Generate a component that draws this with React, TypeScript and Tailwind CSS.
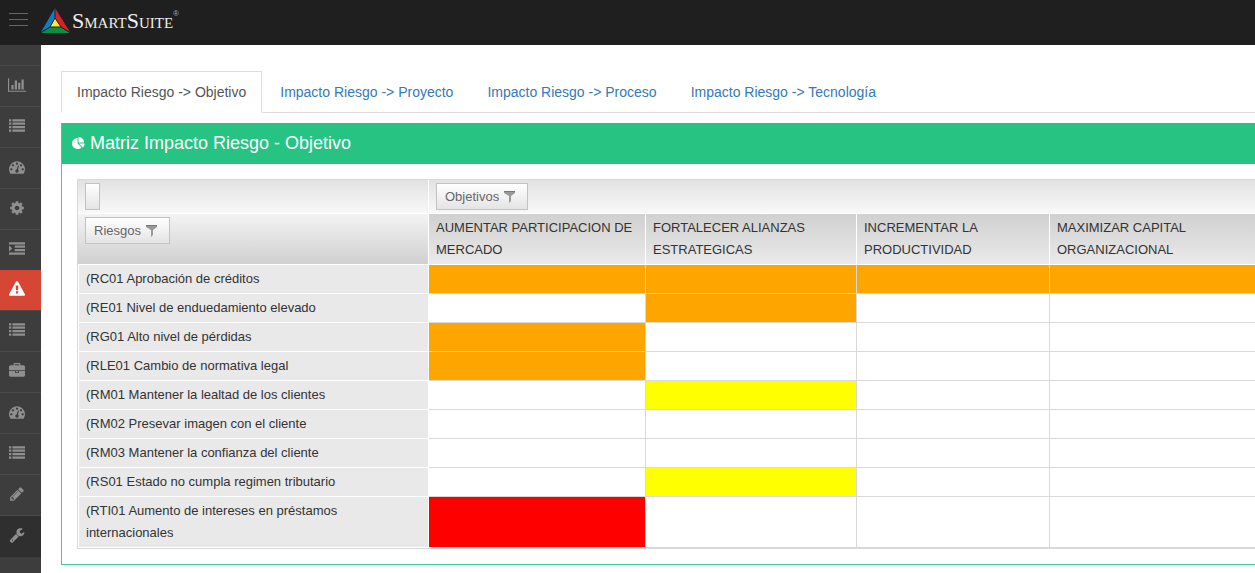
import type { ReactNode } from "react";
import clsx from "clsx";

const listPath =
  "M0 128h256v256H0zM384 128h1408v256H384zM0 512h256v256H0zM384 512h1408v256H384zM0 896h256v256H0zM384 896h1408v256H384zM0 1280h256v256H0zM384 1280h1408v256H384z";

const gaugePath =
  "M384 1152q0-53-37.5-90.5t-90.5-37.5-90.5 37.5-37.5 90.5 37.5 90.5 90.5 37.5 90.5-37.5 37.5-90.5zm192-448q0-53-37.5-90.5t-90.5-37.5-90.5 37.5-37.5 90.5 37.5 90.5 90.5 37.5 90.5-37.5 37.5-90.5zm428 481l101-382q6-26-7.5-48.5t-38.5-29.5-48 6.5-30 39.5l-101 382q-60 5-107 43.5t-63 98.5q-20 77 20 146t117 89 146-20 89-117q16-60-6-117t-72-91zm660-33q0-53-37.5-90.5t-90.5-37.5-90.5 37.5-37.5 90.5 37.5 90.5 90.5 37.5 90.5-37.5 37.5-90.5zm-640-640q0-53-37.5-90.5t-90.5-37.5-90.5 37.5-37.5 90.5 37.5 90.5 90.5 37.5 90.5-37.5 37.5-90.5zm448 192q0-53-37.5-90.5t-90.5-37.5-90.5 37.5-37.5 90.5 37.5 90.5 90.5 37.5 90.5-37.5 37.5-90.5zm320 448q0 261-141 483-19 29-54 29h-1402q-35 0-54-29-141-221-141-483 0-182 71-348t191-286 286-191 348-71 348 71 286 191 191 286 71 348z";

const chartPath =
  "M640 896v512h-256v-512h256zm384-512v1024h-256v-1024h256zm1024 1152v128h-2048v-1536h128v1408h1920zm-640-896v768h-256v-768h256zm384-384v1152h-256v-1152h256z";

const cogPath =
  "M1152 896q0-106-75-181t-181-75-181 75-75 181 75 181 181 75 181-75 75-181zm512-109v222q0 12-8 23t-20 13l-185 28q-19 54-39 91 35 50 107 138 10 12 10 25t-9 23q-27 37-99 108t-94 71q-12 0-26-9l-138-108q-44 23-91 38-16 136-29 186-7 28-36 28h-222q-14 0-24.5-8.5t-11.5-21.5l-28-184q-49-16-90-37l-141 107q-10 9-25 9-14 0-25-11-126-114-165-168-7-10-7-23 0-12 8-23 15-21 51-66.5t54-70.5q-27-50-41-99l-183-27q-13-2-21-12.5t-8-23.5v-222q0-12 8-23t19-13l186-28q14-46 39-92-40-57-107-138-10-12-10-24 0-10 9-23 26-36 98.5-107.5t94.5-71.5q13 0 26 10l138 107q44-23 91-38 16-136 29-186 7-28 36-28h222q14 0 24.5 8.5t11.5 21.5l28 184q49 16 90 37l142-107q9-9 24-9 13 0 25 10 129 119 165 170 7 8 7 22 0 12-8 23-15 21-51 66.5t-54 70.5q26 50 41 98l183 28q13 2 21 12.5t8 23.5z";

const indentPath =
  "M0 128h1792v256H0zM640 512h1152v256H640zM640 896h1152v256H640zM0 1280h1792v256H0zM352 832q0 14-9 23l-288 288q-9 9-23 9-13 0-22.5-9.5t-9.500-22.500v-576q0-13 9.500-22.500t22.500-9.500q14 0 23 9l288 288q9 9 9 23z";

const warningPath =
  "M1024 1375v-190q0-14-9.5-23.5t-22.5-9.5h-192q-13 0-22.5 9.5t-9.5 23.5v190q0 14 9.5 23.5t22.5 9.5h192q13 0 22.5-9.5t9.5-23.5zm-2-374l18-459q0-12-10-19-13-11-24-11h-220q-11 0-24 11-10 7-10 21l17 457q0 10 10 16.5t24 6.5h185q14 0 23.5-6.5t10.5-16.5zm-14-934l768 1408q35 63-2 126-17 29-46.5 46t-63.5 17h-1536q-34 0-63.5-17t-46.5-46q-37-63-2-126l768-1408q17-31 47-49t65-18 65 18 47 49z";

const briefcasePath =
  "M640 256h512v-128h-512v128zm1152 640v480q0 66-47 113t-113 47h-1472q-66 0-113-47t-47-113v-480h672v160q0 26 19 45t45 19h320q26 0 45-19t19-45v-160h672zm-768 0v128h-256v-128h256zm768-480v384h-1792v-384q0-66 47-113t113-47h352v-160q0-40 28-68t68-28h576q40 0 68 28t28 68v160h352q66 0 113 47t47 113z";

const pencilPath =
  "M491 1536l91-91-235-235-91 91v107h128v128h107zm523-928q0-22-22-22-10 0-17 7l-542 542q-7 7-7 17 0 22 22 22 10 0 17-7l542-542q7-7 7-17zm-54-192l416 416-832 832h-416v-416zm683 96q0 53-37 90l-166 166-416-416 166-165q36-38 90-38 53 0 91 38l235 234q37 39 37 91z";

const wrenchPath =
  "M448 1472q0-26-19-45t-45-19-45 19-19 45 19 45 45 19 45-19 19-45zm644-420l-682 682q-37 37-90 37-52 0-91-37l-106-108q-38-36-38-90 0-53 38-91l681-681q39 98 114.5 173.5t173.5 114.5zm634-435q0 39-23 106-47 134-164.5 217.5t-258.5 83.5q-185 0-316.5-131.5t-131.5-316.5 131.5-316.5 316.5-131.5q58 0 121.5 16.5t107.5 46.5q16 11 16 28t-16 28l-293 169v224l193 107q5-3 79-48.5t135.5-81 70.5-35.5q15 0 23.5 10t8.5 25z";

const piePath =
  "M768 890l546 546q-106 108-247.5 168t-298.5 60q-209 0-385.5-103t-279.5-279.5-103-385.5 103-385.5 279.5-279.5 385.5-103v762zm187 6h773q0 157-60 298.5t-168 247.5zm709-128h-768v-768q209 0 385.5 103t279.5 279.5 103 385.5z";

const menu = [
  { label: "Estadísticas", path: chartPath, wide: true },
  { label: "Planes", path: listPath },
  { label: "Indicadores", path: gaugePath },
  { label: "Configuración", path: cogPath },
  { label: "Procesos", path: indentPath },
  { label: "Riesgos", path: warningPath, state: "active" },
  { label: "Controles", path: listPath },
  { label: "Proyectos", path: briefcasePath },
  { label: "Tablero", path: gaugePath },
  { label: "Listas", path: listPath },
  { label: "Editar", path: pencilPath },
  { label: "Herramientas", path: wrenchPath, state: "dark" },
];

const tabs = ["Objetivo", "Proyecto", "Proceso", "Tecnología"];

const columns = [
  "AUMENTAR PARTICIPACION DE MERCADO",
  "FORTALECER ALIANZAS ESTRATEGICAS",
  "INCREMENTAR LA PRODUCTIVIDAD",
  "MAXIMIZAR CAPITAL ORGANIZACIONAL",
];

// o = medium, y = low, r = high, - = no impact
const rows = [
  { name: "(RC01 Aprobación de créditos", cells: "oooo" },
  { name: "(RE01 Nivel de enduedamiento elevado", cells: "-o--" },
  { name: "(RG01 Alto nivel de pérdidas", cells: "o---" },
  { name: "(RLE01 Cambio de normativa legal", cells: "o---" },
  { name: "(RM01 Mantener la lealtad de los clientes", cells: "-y--" },
  { name: "(RM02 Presevar imagen con el cliente", cells: "----" },
  { name: "(RM03 Mantener la confianza del cliente", cells: "----" },
  { name: "(RS01 Estado no cumpla regimen tributario", cells: "-y--" },
  { name: "(RTI01 Aumento de intereses en préstamos internacionales", cells: "r---" },
];

const levelColor: Record<string, string> = {
  o: "bg-[#ffa500]",
  y: "bg-[#ffff00]",
  r: "bg-[#ff0000]",
  "-": "bg-white",
};

function Header() {
  return (
    <header className="flex h-[45px] items-start bg-[#1f1f1f]">
      <button aria-label="Menú" className="ml-[9px] mt-[13px] flex w-[19px] flex-col gap-[5px]">
        <span className="h-px w-full bg-[#666]" />
        <span className="h-px w-full bg-[#666]" />
        <span className="h-px w-full bg-[#666]" />
      </button>
      <a href="#" className="ml-[13px] mt-2 flex items-start text-[#eee]">
        <svg width="29" height="25" viewBox="0 0 29 25">
          <path d="M14 0L0 24L9 19L14 10z" fill="#0a7fc4" />
          <path d="M14 0L29 24L20 19L14 10z" fill="#dc1f2b" />
          <path d="M0 25L9 19h11l9 6z" fill="#0c8f45" />
          <path d="M14 10L9 19h11z" fill="#fbe93c" />
          <path d="M14 0v10M14 10L9 19L0 24.500M9 19h11L29 24.500M20 19L14 10" fill="none" stroke="#1f1f1f" />
        </svg>
        <span className="ml-[2px] mt-px font-['Liberation_Serif',serif] text-[22px] leading-6 [font-variant-caps:small-caps]">
          SmartSuite
        </span>
        <span className="mt-px text-[8px] leading-[10px] text-[#aaa]">®</span>
      </a>
    </header>
  );
}

function Sidebar() {
  return (
    <nav className="w-[41px] shrink-0 bg-[#3d3d3d] pt-5">
      {menu.map((item, i) => (
        <a
          key={i}
          href="#"
          aria-label={item.label}
          className={clsx(
            "flex items-center pb-[3px]",
            item.wide ? "pl-2" : "pl-[9px]",
            item.state === "active" ? "h-10 bg-[#d64635] text-white" : "border-t border-[#4a4a4a] text-[#8f8f8f]",
            item.state === "dark" && "h-[42px] bg-[#2f2f2f]",
            !item.state && "h-[41px]"
          )}
        >
          <svg
            width={item.wide ? 18 : 16}
            height="16"
            viewBox={item.wide ? "0 0 2048 1792" : "0 0 1792 1792"}
            fill="currentColor"
          >
            <path d={item.path} />
          </svg>
        </a>
      ))}
    </nav>
  );
}

function FieldButton({ children }: { children: ReactNode }) {
  return (
    <button className="flex h-[27px] items-center gap-[5px] border border-[#c2c2c2] bg-linear-to-b from-white to-[#e4e4e4] px-2 text-[13px] text-[#666]">
      {children}
      <svg width="11" height="12" viewBox="0 0 11 12" className="mr-1">
        <path d="M0 0h11v2L7 5v5L5 12V5L0 2z" fill="#999" />
        <path d="M0 0h11v1H0z" fill="#777" />
      </svg>
    </button>
  );
}

function Matrix() {
  return (
    <table className="w-full table-fixed border-separate border-spacing-0 border-y border-l border-[#d9d9d9] text-left text-[13px] leading-[22px] text-[#333]">
      <colgroup>
        <col className="w-[351px]" />
        <col className="w-[217px]" />
        <col className="w-[211px]" />
        <col className="w-[193px]" />
        <col />
      </colgroup>
      <thead>
        <tr>
          <td className="border-r border-b border-white bg-linear-to-b from-[#e2e2e2] to-[#f8f8f8] px-[7px] py-[3px]">
            <button
              aria-label="Filtros"
              className="block h-[27px] w-[15px] border border-[#c2c2c2] bg-linear-to-b from-white to-[#e4e4e4]"
            />
          </td>
          <td colSpan={4} className="border-b border-white bg-linear-to-b from-[#e2e2e2] to-[#f8f8f8] px-[7px] py-[3px]">
            <FieldButton>Objetivos</FieldButton>
          </td>
        </tr>
        <tr>
          <td className="border-r border-b border-white bg-linear-to-b from-[#f3f3f3] to-[#d0d0d0] px-[7px] py-[3px] align-top">
            <FieldButton>Riesgos</FieldButton>
          </td>
          {columns.map((column, i) => (
            <th
              key={column}
              scope="col"
              className={clsx(
                "border-b border-white bg-linear-to-b from-[#d0d0d0] to-[#eaeaea] px-[7px] py-[3px] font-normal",
                i < 3 && "border-r"
              )}
            >
              <div className="max-w-[200px]">{column}</div>
            </th>
          ))}
        </tr>
      </thead>
      <tbody>
        {rows.map((row) => (
          <tr key={row.name}>
            <th scope="row" className="border-x border-b border-white bg-[#e9e9e9] px-[7px] py-[3px] font-normal">
              <div className="max-w-[300px]">{row.name}</div>
            </th>
            {row.cells.split("").map((level, i) => (
              <td key={i} className={clsx("border-b border-[#d9d9d9]", i < 3 && "border-r", levelColor[level])} />
            ))}
          </tr>
        ))}
      </tbody>
    </table>
  );
}

export default function App() {
  return (
    <div className="min-h-screen bg-white font-['Liberation_Sans',Arial,sans-serif]">
      <Header />
      <div className="flex min-h-[calc(100vh-45px)]">
        <Sidebar />
        <main className="min-w-0 flex-1 pt-[26px] pl-5">
          <nav className="flex gap-[2px] border-b border-[#ddd] text-sm leading-5">
            {tabs.map((tab, i) => (
              <a
                key={tab}
                href="#"
                className={clsx(
                  "-mb-px border px-[15px] py-[10px]",
                  i === 0 ? "border-[#ddd] border-b-white bg-white text-[#555]" : "border-transparent text-[#337ab7]"
                )}
              >
                Impacto Riesgo -&gt; {tab}
              </a>
            ))}
          </nav>
          <section className="mt-[10px] border-b border-l border-[#3ecf94]">
            <h1 className="flex h-[41px] items-center gap-[5px] bg-[#27c383] pb-[2px] pl-[10px] text-lg text-white">
              <svg width="13" height="13" viewBox="0 0 1792 1792" fill="currentColor" className="mt-[2px]">
                <path d={piePath} />
              </svg>
              Matriz Impacto Riesgo - Objetivo
            </h1>
            <div className="py-[15px] pl-[15px]">
              <Matrix />
            </div>
          </section>
        </main>
      </div>
    </div>
  );
}
